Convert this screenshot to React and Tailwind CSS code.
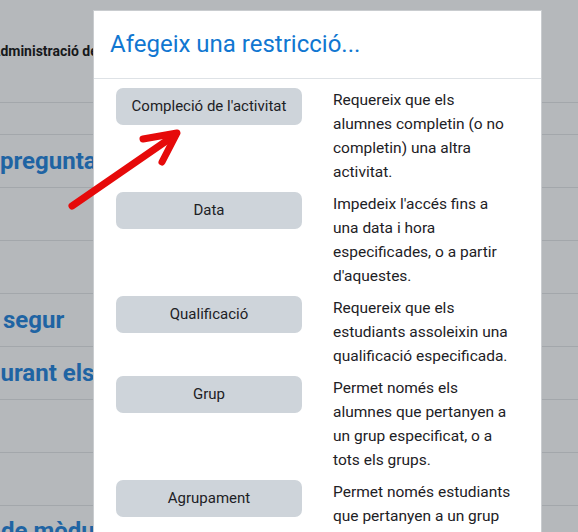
import React from "react";

const rows = [
  {
    label: "Compleció de l'activitat",
    desc: "Requereix que els alumnes completin (o no completin) una altra activitat.",
  },
  {
    label: "Data",
    desc: "Impedeix l'accés fins a una data i hora especificades, o a partir d'aquestes.",
  },
  {
    label: "Qualificació",
    desc: "Requereix que els estudiants assoleixin una qualificació especificada.",
  },
  {
    label: "Grup",
    desc: "Permet només els alumnes que pertanyen a un grup especificat, o a tots els grups.",
  },
  {
    label: "Agrupament",
    desc: "Permet només estudiants que pertanyen a un grup dins d'un agrupament especificat.",
  },
];

function BgRow({ h, children }) {
  return (
    <div
      className={`${h} shrink-0 border-b border-[#a3a7ab] flex items-center overflow-hidden whitespace-nowrap`}
    >
      {children}
    </div>
  );
}

export default function App() {
  const blue = "text-[#1f64a3] font-bold text-[24px] leading-none";
  return (
    <div
      className="relative w-[578px] h-[532px] overflow-hidden bg-[#b5b8bb]"
      style={{ fontFamily: "Roboto, 'Noto Sans', sans-serif" }}
    >
      {/* background page */}
      <div className="flex flex-col">
        <BgRow h="h-[103px]">
          <span className="ml-[-9px] text-[14px] font-bold text-[#17191b]">
            Administració del curs
          </span>
        </BgRow>
        <BgRow h="h-[32px]" />
        <BgRow h="h-[53px]">
          <span className={`${blue} ml-[0px]`}>pregunta de</span>
        </BgRow>
        <BgRow h="h-[53px]" />
        <BgRow h="h-[53px]" />
        <BgRow h="h-[53px]">
          <span className={`${blue} ml-[3px]`}>segur</span>
        </BgRow>
        <BgRow h="h-[53px]">
          <span className={`${blue} ml-[-13px]`}>durant els</span>
        </BgRow>
        <BgRow h="h-[53px]" />
        <BgRow h="h-[53px]" />
        <div className="h-[60px] shrink-0 pt-[13px] whitespace-nowrap overflow-hidden">
          <span className={`${blue} ml-[1px]`}>de mòdul</span>
        </div>
      </div>

      {/* modal */}
      <div className="absolute left-[93px] top-[10px] w-[449px] h-[560px] bg-white border border-[#c9cccf]">
        <div className="h-[68px] border-b border-[#dee2e6] flex items-center px-[16px]">
          <h5 className="text-[24px] leading-[1.2] text-[#1177d1] font-normal whitespace-nowrap">
            Afegeix una restricció...
          </h5>
        </div>
        <div className="pt-[9px] pl-[22px] pr-[16px]">
          {rows.map((r) => (
            <div
              key={r.label}
              className="grid grid-cols-[186px_183px] gap-x-[31px] mb-[8px]"
            >
              <div>
                <button className="w-[186px] h-[37px] rounded-[7px] bg-[#ced4da] text-[15px] text-[#1d2125] flex items-center justify-center whitespace-nowrap">
                  {r.label}
                </button>
              </div>
              <p className="text-[15.5px] leading-[24px] text-[#1d2125] w-[183px]">
                {r.desc}
              </p>
            </div>
          ))}
        </div>
      </div>

      {/* red arrow annotation */}
      <svg
        className="absolute left-0 top-0 pointer-events-none"
        width="578"
        height="532"
        viewBox="0 0 578 532"
      >
        <g
          stroke="#e60a0a"
          strokeWidth="7"
          strokeLinecap="round"
          strokeLinejoin="round"
          fill="none"
        >
          <line x1="72" y1="206" x2="175" y2="135" />
          <polyline points="143,139 177,133 162,162" />
        </g>
      </svg>
    </div>
  );
}
